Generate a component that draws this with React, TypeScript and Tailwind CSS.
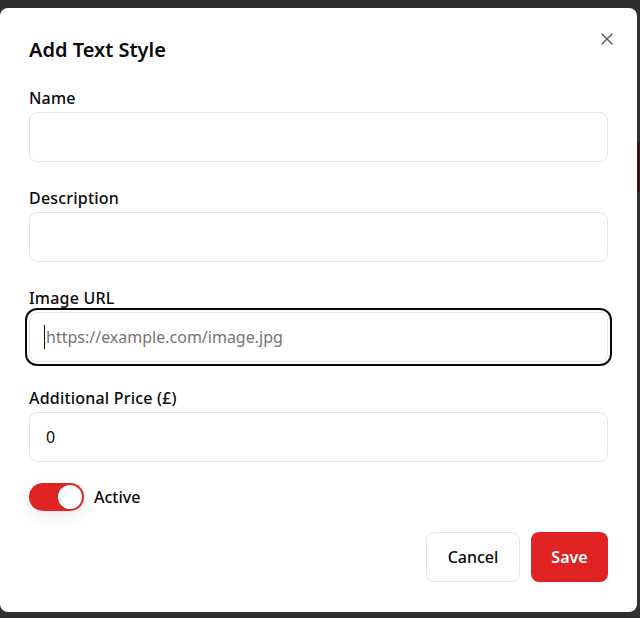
import React from "react";

const font = { fontFamily: '"Noto Sans", "Open Sans", sans-serif' };

function Field({ label, placeholder, value, focused }: { label: string; placeholder?: string; value?: string; focused?: boolean }) {
  return (
    <div className="flex flex-col gap-[2px]">
      <label className="text-[16px] leading-6 font-medium text-[#0a0a0a] tracking-[0.2px]">{label}</label>
      <div className="relative">
        <input
          defaultValue={value}
          placeholder={placeholder}
          className={
            "h-[50px] w-full rounded-lg border border-[#e5e5e5] bg-white px-4 text-[16px] text-[#0a0a0a] placeholder:text-[#757575] outline-none" +
            (focused ? " ring-2 ring-[#0a0a0a] ring-offset-2 ring-offset-white" : "")
          }
        />
        {focused && <span className="absolute left-[15px] top-[13px] h-[24px] w-px bg-[#0a0a0a]" />}
      </div>
    </div>
  );
}

export default function App() {
  return (
    <div className="relative h-[618px] w-[640px] overflow-hidden bg-[#2f2f2f]" style={font}>
      <div className="absolute right-0 top-[142px] h-[50px] w-[3px] bg-[#3a1414]" />
      <div className="relative ml-0 mt-[8px] flex h-[604px] w-[637px] flex-col rounded-lg bg-white px-[29px] pt-[28px] pb-[30px]">
        <button className="absolute right-[24px] top-[25px] flex h-[12px] w-[12px] items-center justify-center text-[#555]">
          <svg width="12" height="12" viewBox="0 0 12 12" fill="none" stroke="currentColor" strokeWidth="1.4" strokeLinecap="round">
            <path d="M1 1L11 11M11 1L1 11" />
          </svg>
        </button>
        <h2 className="text-[20px] leading-7 font-semibold text-[#0a0a0a]">Add Text Style</h2>
        <div className="mt-[22px] flex flex-col gap-[24px]">
          <Field label="Name" />
          <Field label="Description" />
          <Field label="Image URL" placeholder="https://example.com/image.jpg" focused />
          <Field label="Additional Price (£)" value="0" />
        </div>
        <div className="mt-[21px] flex items-center gap-[10px]">
          <div className="flex h-[28px] w-[55px] items-center justify-end rounded-full bg-[#e02424] px-[2px] shadow-[0_6px_14px_rgba(0,0,0,0.08)]">
            <div className="h-[24px] w-[24px] rounded-full bg-white" />
          </div>
          <span className="text-[16px] font-medium text-[#0a0a0a]">Active</span>
        </div>
        <div className="mt-[21px] flex justify-end gap-[11px]">
          <button className="h-[50px] w-[94px] rounded-lg border border-[#e5e5e5] bg-white text-[16px] font-medium text-[#0a0a0a]">
            Cancel
          </button>
          <button className="h-[50px] w-[77px] rounded-lg bg-[#e02424] text-[16px] font-semibold text-white">
            Save
          </button>
        </div>
      </div>
    </div>
  );
}
